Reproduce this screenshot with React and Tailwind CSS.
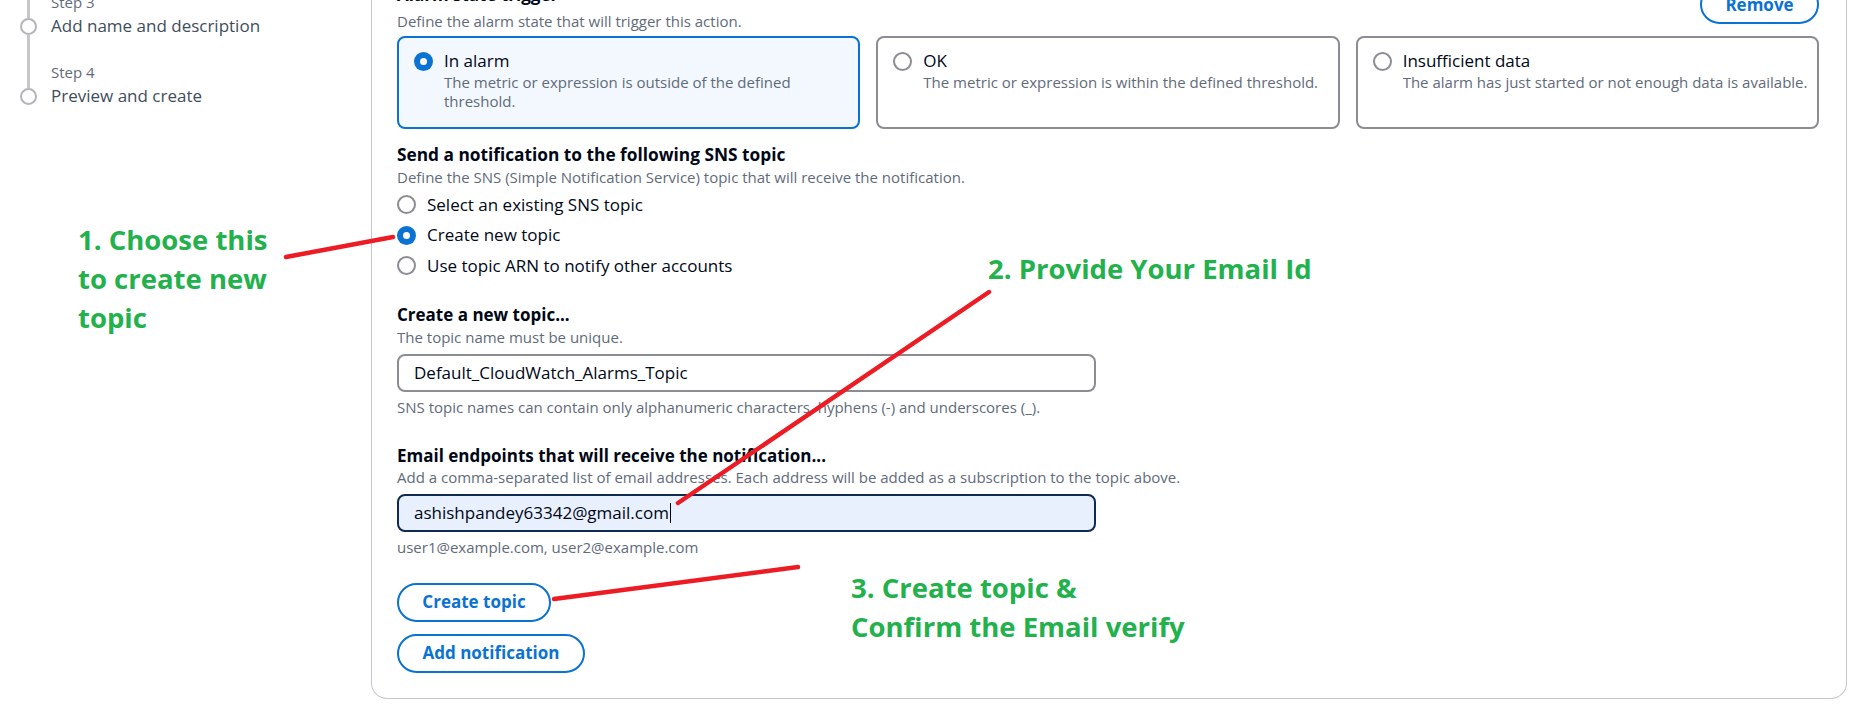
function Radio({ checked }) {
  if (checked) {
    return (
      <span className="mt-[2.5px] flex h-[19px] w-[19px] shrink-0 items-center justify-center rounded-full bg-[#0972d3]">
        <span className="h-[7px] w-[7px] rounded-full bg-white" />
      </span>
    );
  }
  return <span className="mt-[2.5px] h-[19px] w-[19px] shrink-0 rounded-full border-2 border-[#8c8c94]" />;
}

function Step({ n, title, last }) {
  return (
    <div className="flex">
      <div className="flex w-[17px] flex-col items-center">
        <div className="h-[25px] w-[3px] bg-[#c6c6cd]" />
        <div className="h-[17px] w-[17px] shrink-0 rounded-full border-[2.5px] border-[#b4b4bb]" />
        {!last && <div className="w-[3px] flex-1 bg-[#c6c6cd]" />}
      </div>
      <div className={last ? "ml-[14px]" : "ml-[14px] pb-[24.5px]"}>
        <div className="text-[15px] leading-[19px] text-[#5f6b7a]">Step {n}</div>
        <div className="mt-[2.5px] text-[17px] leading-[24px] text-[#414d5c]">{title}</div>
      </div>
    </div>
  );
}

function Tile({ checked, title, desc }) {
  return (
    <div
      className={`flex gap-[11px] rounded-[8px] border-2 pl-[15px] pr-[6px] pt-[11px] pb-[15.5px] ${
        checked ? "border-[#0972d3] bg-[#f2f8fd]" : "border-[#8c8c94] bg-white"
      }`}
    >
      <Radio checked={checked} />
      <div>
        <div className="text-[17px] leading-[24px]">{title}</div>
        <div className="text-[15px] leading-[19px] text-[#5f6b7a]">{desc}</div>
      </div>
    </div>
  );
}

const tiles = [
  { checked: true, title: "In alarm", desc: "The metric or expression is outside of the defined threshold." },
  { checked: false, title: "OK", desc: "The metric or expression is within the defined threshold." },
  { checked: false, title: "Insufficient data", desc: "The alarm has just started or not enough data is available." },
];

const topicOptions = [
  { label: "Select an existing SNS topic", checked: false },
  { label: "Create new topic", checked: true },
  { label: "Use topic ARN to notify other accounts", checked: false },
];

function PillButton({ children, className }) {
  return (
    <button
      className={`flex h-[39px] items-center justify-center rounded-full border-2 border-[#0972d3] bg-white text-[17px] font-bold text-[#0972d3] ${className}`}
    >
      {children}
    </button>
  );
}

function Card() {
  return (
    <section className="mt-[-40px] rounded-b-[16px] border border-t-0 border-[#c6c6cd] pt-[23px] pb-[25px] pl-[25px] pr-[27px]">
      <div className="flex items-start justify-between">
        <div>
          <h3 className="text-[17px] font-bold leading-[24px]">Alarm state trigger</h3>
          <p className="mt-[4.5px] text-[15px] leading-[19px] text-[#5f6b7a]">
            Define the alarm state that will trigger this action.
          </p>
        </div>
        <PillButton className="mt-[2px] w-[119px]">Remove</PillButton>
      </div>

      <div className="mt-[5.5px] grid grid-cols-3 gap-[16px]">
        {tiles.map((t, i) => (
          <Tile key={i} {...t} />
        ))}
      </div>

      <h3 className="mt-[14px] text-[17.3px] font-bold leading-[24px]">Send a notification to the following SNS topic</h3>
      <p className="mt-[1.5px] text-[15px] leading-[19px] text-[#5f6b7a]">
        Define the SNS (Simple Notification Service) topic that will receive the notification.
      </p>
      <div className="mt-[5.5px] flex flex-col gap-[6.5px]">
        {topicOptions.map((o, i) => (
          <div key={i} className="flex gap-[11px]">
            <Radio checked={o.checked} />
            <span className="text-[17px] leading-[24px]">{o.label}</span>
          </div>
        ))}
      </div>

      <h3 className="mt-[25px] text-[17px] font-bold leading-[24px]">Create a new topic...</h3>
      <p className="mt-[1.5px] text-[15px] leading-[19px] text-[#5f6b7a]">The topic name must be unique.</p>
      <div className="mt-[6.5px] flex h-[38px] w-[699px] items-center rounded-[8px] border-2 border-[#8c8c94] pl-[15px] text-[17px]">
        Default_CloudWatch_Alarms_Topic
      </div>
      <p className="mt-[6.5px] text-[15px] leading-[19px] text-[#5f6b7a]">
        SNS topic names can contain only alphanumeric characters, hyphens (-) and underscores (_).
      </p>

      <h3 className="mt-[26.5px] text-[17px] font-bold leading-[24px]">
        Email endpoints that will receive the notification...
      </h3>
      <p className="mt-[0.5px] text-[15px] leading-[19px] text-[#5f6b7a]">
        Add a comma-separated list of email addresses. Each address will be added as a subscription to the topic above.
      </p>
      <div className="mt-[6.5px] flex h-[38px] w-[699px] items-center rounded-[8px] border-2 border-[#0f2b52] bg-[#e8f0fe] pl-[15px] text-[17px]">
        ashishpandey63342@gmail.com
        <span className="ml-[1px] inline-block h-[20px] w-[1.5px] bg-black" />
      </div>
      <p className="mt-[6.5px] text-[15px] leading-[19px] text-[#5f6b7a]">user1@example.com, user2@example.com</p>

      <PillButton className="mt-[25.5px] w-[154px]">Create topic</PillButton>
      <PillButton className="mt-[12px] w-[188px]">Add notification</PillButton>
    </section>
  );
}

function Annotations() {
  return (
    <>
      <svg className="pointer-events-none absolute inset-0" width="1865" height="715">
        <g stroke="#ed1c24" strokeWidth="4.5" strokeLinecap="round">
          <line x1="286" y1="257" x2="393" y2="237" />
          <line x1="989" y1="292" x2="678" y2="503" />
          <line x1="554" y1="599" x2="798" y2="567" />
        </g>
      </svg>
      <div className="absolute left-[78px] top-[219.5px] text-[27.5px] font-bold leading-[39px] text-[#22b14c]">
        1. Choose this
        <br />
        to create new
        <br />
        topic
      </div>
      <div className="absolute left-[988px] top-[248.5px] text-[27.5px] font-bold leading-[39px] text-[#22b14c]">
        2. Provide Your Email Id
      </div>
      <div className="absolute left-[851px] top-[567.5px] text-[27.5px] font-bold leading-[39px] text-[#22b14c]">
        3. Create topic &amp;
        <br />
        Confirm the Email verify
      </div>
    </>
  );
}

export default function App() {
  return (
    <div className="relative h-[715px] w-[1865px] overflow-hidden bg-white font-['Open_Sans',sans-serif] text-[#000716]">
      <div className="flex h-full">
        <aside className="w-[371px] shrink-0 pl-[20px]">
          <div className="mt-[-7.5px]">
            <Step n={3} title="Add name and description" />
            <Step n={4} title="Preview and create" last />
          </div>
        </aside>
        <main className="min-w-0 flex-1 pr-[18px]">
          <Card />
        </main>
      </div>
      <Annotations />
    </div>
  );
}
